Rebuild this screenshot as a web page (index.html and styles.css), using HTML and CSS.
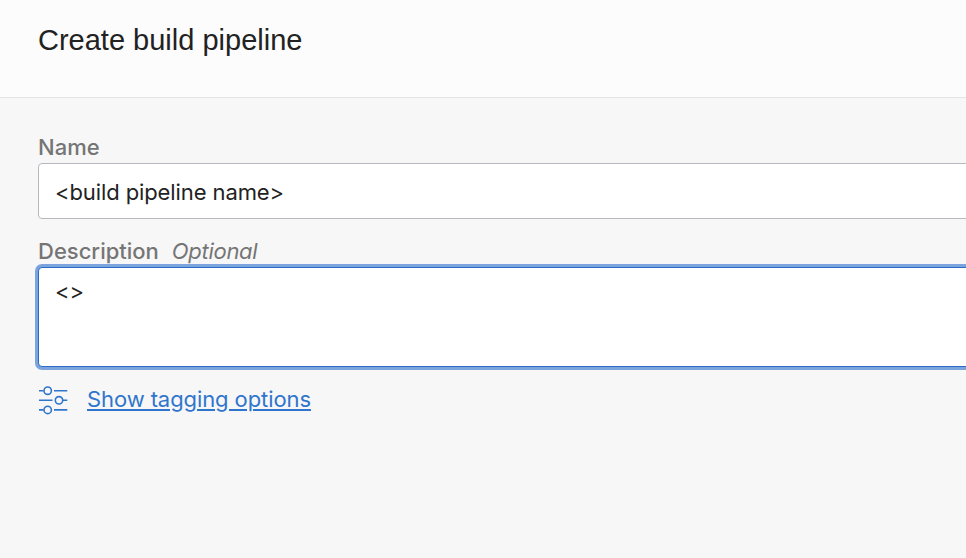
FILE: index.html
```html
<!DOCTYPE html>
<html lang="en">
<head>
<meta charset="utf-8">
<title>Create build pipeline</title>
<link rel="stylesheet" href="styles.css">
</head>
<body>
<header class="header"><h1 class="title">Create build pipeline</h1></header>
<main class="form">
  <div class="label-row"><span class="label">Name</span></div>
  <div class="field input"><span class="name-value">&lt;build pipeline name&gt;</span></div>
  <div class="label-row second"><span class="label">Description</span><em class="optional">Optional</em></div>
  <div class="field textarea"><span>&lt;&gt;</span></div>
  <div class="tagging">
    <svg class="icon" viewBox="0 0 30 30" width="30" height="30" fill="none" stroke="#3075cc" stroke-width="1.6">
      <path d="M1 5.700h4.500M16 5.700H29.300M1 15.300h13.500M25 15.300h4.300M1 24.900h4.500M16 24.900H29.300"/>
      <circle cx="9.700" cy="5.700" r="3.700"/><circle cx="21" cy="15.300" r="3.700"/><circle cx="9.700" cy="24.900" r="3.700"/>
    </svg>
    <a class="link" href="#">Show tagging options</a>
  </div>
</main>
</body>
</html>
```
FILE: styles.css
```css
* { box-sizing: border-box; }
body { margin: 0; height: 558px; overflow: hidden; background: #f7f7f7; font-family: Inter, "Liberation Sans", sans-serif; font-size: 22px; color: #222; }
.header { height: 98px; padding: 22px 38px; background: #fcfcfc; border-bottom: 1px solid #e4e4e4; }
.title { margin: 0; font: 400 29px/37px "Liberation Sans", sans-serif; }
.form { padding: 34px 0 0 38px; }
.label-row { height: 31px; line-height: 30px; display: flex; gap: 13px; color: #757575; }
.label { font-weight: 500; }
.optional { letter-spacing: -0.3px; }
.field { width: 960px; background: #fff; border: 1px solid #b6b9bf; border-radius: 4px; padding-left: 16px; }
.input { height: 56px; line-height: 56px; letter-spacing: -0.1px; }
.second { margin-top: 17px; }
.textarea { height: 100px; padding-top: 10px; line-height: 26px; border-color: #2b6bc4; box-shadow: 0 0 0 3px #7ba4de; }
.tagging { display: flex; align-items: center; gap: 19px; margin-top: 18px; height: 30px; }
.link { color: #3075cc; letter-spacing: -0.09px; margin-top: -2px; text-decoration-thickness: 2px; text-underline-offset: 2px; }
```
